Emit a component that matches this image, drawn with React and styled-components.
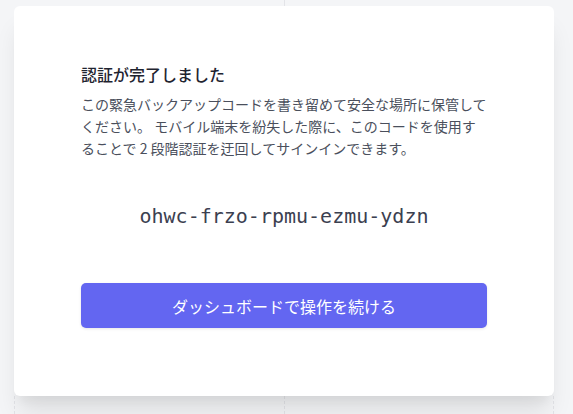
import React from 'react';
import styled, { createGlobalStyle } from 'styled-components';

const GlobalStyle = createGlobalStyle`
  html, body {
    margin: 0;
    padding: 0;
    background: #f4f5f7;
  }
  body {
    font-family: "Noto Sans CJK JP", "Noto Sans", sans-serif;
    -webkit-font-smoothing: antialiased;
  }
`;

const Page = styled.div`
  width: 573px;
  height: 414px;
  overflow: hidden;
  padding-left: 14px;
  box-sizing: border-box;
`;

const Frame = styled.div`
  width: 540px;
  display: flex;
  flex-direction: column;
`;

const Rail = styled.div`
  height: ${(p) => p.$h}px;
  display: flex;
  justify-content: space-between;
`;

const RailLine = styled.span`
  width: 0;
  border-left: 1px ${(p) => (p.$dashed ? 'dashed' : 'solid')} #e3e4e8;
  visibility: ${(p) => (p.$hidden ? 'hidden' : 'visible')};
`;

const Card = styled.div`
  position: relative;
  z-index: 1;
  height: 390px;
  background: #ffffff;
  border-radius: 6px;
  box-shadow: 0 20px 25px -5px rgba(0, 0, 0, 0.1), 0 10px 10px -5px rgba(0, 0, 0, 0.04);
  box-sizing: border-box;
  padding-top: 56px;
  display: flex;
  flex-direction: column;
  align-items: center;
`;

const Content = styled.div`
  width: 406px;
  display: flex;
  flex-direction: column;
`;

const Title = styled.h2`
  margin: 0;
  font-size: 16px;
  line-height: 24px;
  font-weight: 500;
  color: #1f2430;
`;

const Body = styled.p`
  margin: 7px 0 0;
  font-size: 14px;
  line-height: 22px;
  color: #4a4f5c;
`;

const Code = styled.div`
  margin-top: 43px;
  text-align: center;
  font-family: "DejaVu Sans Mono", "Liberation Mono", monospace;
  font-size: 20px;
  line-height: 28px;
  color: #3b4050;
`;

const Button = styled.button`
  margin-top: 53px;
  height: 45px;
  width: 100%;
  border: none;
  border-radius: 5px;
  background: #6366f1;
  color: #ffffff;
  font-family: "Noto Sans CJK JP", "Noto Sans", sans-serif;
  font-size: 16px;
  font-weight: 400;
  box-shadow: 0 1px 3px rgba(0, 0, 0, 0.1);
  cursor: pointer;
`;

export default function App() {
  return (
    <>
      <GlobalStyle />
      <Page>
        <Frame>
          <Rail $h={6}>
            <RailLine $hidden />
            <RailLine />
            <RailLine $hidden />
          </Rail>
          <Card>
            <Content>
              <Title>認証が完了しました</Title>
              <Body>
                この緊急バックアップコードを書き留めて安全な場所に保管してください。 モバイル端末を紛失した際に、このコードを使用することで 2 段階認証を迂回してサインインできます。
              </Body>
              <Code>ohwc-frzo-rpmu-ezmu-ydzn</Code>
              <Button>ダッシュボードで操作を続ける</Button>
            </Content>
          </Card>
          <Rail $h={18}>
            <RailLine $dashed />
            <RailLine $dashed />
            <RailLine $dashed />
          </Rail>
        </Frame>
      </Page>
    </>
  );
}
